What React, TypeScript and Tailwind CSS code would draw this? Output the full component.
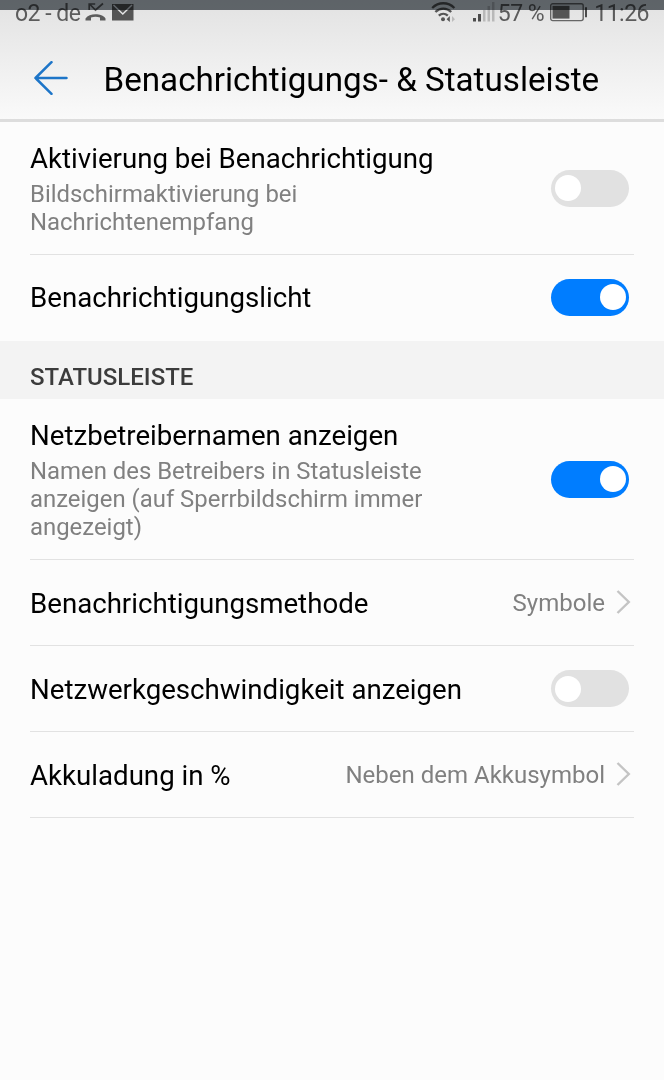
import { useState } from 'react';
import type { ReactNode } from 'react';
import clsx from 'clsx';

function Toggle({ label, initial }: { label: string; initial: boolean }) {
  const [on, setOn] = useState(initial);

  return (
    <button
      type="button"
      role="switch"
      aria-label={label}
      aria-checked={on}
      onClick={() => setOn(!on)}
      className={clsx(
        'flex h-[37px] w-[78px] shrink-0 items-center rounded-full px-[3.5px]',
        on ? 'justify-end bg-[#007dff]' : 'justify-start bg-[#e1e1e1]'
      )}
    >
      <span className="size-[26px] rounded-full bg-white" />
    </button>
  );
}

function Value({ children }: { children: ReactNode }) {
  return (
    <div className="-mr-[2px] flex shrink-0 items-center gap-[11px] text-[24px] text-[#808080]">
      <span className="pt-px">{children}</span>
      <svg className="-mt-[2px]" width="15" height="24" viewBox="0 0 15 24" fill="none" stroke="#c4c4c4" strokeWidth="2.4">
        <path d="M1.5 1 12.8 12 1.5 23" />
      </svg>
    </div>
  );
}

type RowProps = {
  title: string;
  description?: string;
  className: string;
  children: ReactNode;
};

function Row({ title, description, className, children }: RowProps) {
  return (
    <div className={clsx('mx-[30px] flex items-center justify-between border-[#e2e2e2] pr-[5px]', className)}>
      <div className="pt-[2px]">
        <h2 className="text-[27.65px] leading-[34px] whitespace-nowrap text-black">{title}</h2>
        {description && (
          <p className="mt-[4px] w-[410px] text-[23.9px] leading-[28px] text-[#808080]">{description}</p>
        )}
      </div>
      {children}
    </div>
  );
}

function StatusBar() {
  return (
    <div className="relative flex h-[27px] items-start justify-between pr-[15px] pl-[15px] text-[23px] leading-[27px] tracking-[-0.5px] text-[#5c5c5c]">
      <div className="flex items-start">
        <span>o2 - de</span>
        {/* Missed call */}
        <svg className="mt-[2px] ml-[5px]" width="22" height="20" viewBox="0 0 22 20" fill="none">
          <path d="M5 2.5 10.5 8 18 1.5M4.2 8V2h6" stroke="#5c5c5c" strokeWidth="1.7" />
          <path d="M.5 18.600v-2.200C2.600 13.200 6.300 12.200 10.500 12.200s8 1 10 4.200v2.200h-5.500v-3c-3-1-6-1-9 0v3z" fill="#5c5c5c" />
        </svg>
        {/* Mail */}
        <svg className="mt-[4px] ml-[5px]" width="22" height="17" viewBox="0 0 22 17" fill="none">
          <rect width="21.500" height="16.500" fill="#555" />
          <path d="m1.500 1 9.300 9L20 1" stroke="#e4e4e4" strokeWidth="1.500" />
        </svg>
      </div>
      <div className="flex items-start">
        {/* Wifi with traffic arrows */}
        <svg className="mt-px" width="26" height="21" viewBox="0 0 26 21" fill="none" stroke="#555" strokeWidth="2.300">
          <path d="M1.200 7c6.400-6.300 15.800-6.300 22.200 0M4.400 11c4.600-4.500 11.200-4.500 15.800 0M7.800 14.700c2.700-2.500 6.300-2.500 9 0" />
          <circle cx="12" cy="18.200" r="2" fill="#555" stroke="none" />
          <path d="M18.800 15v6l-3.200-2.700z" fill="#555" stroke="none" />
          <path d="M21 15v6l3-2.700z" fill="#bbb" stroke="none" />
        </svg>
        {/* Signal */}
        <svg className="mt-px ml-[16px]" width="23" height="21" viewBox="0 0 23 21">
          <path d="M0 17h3v3.500H0zM5 13h3v7.500H5z" fill="#4c4c4c" />
          <path d="M10 9h2.500v11.500H10zM14.500 5H17v15.500h-2.500zM19 1h2.500v19.500H19z" fill="#b9b9b9" />
        </svg>
        <span className="ml-[2px]">57 %</span>
        <svg className="mt-[3px] ml-[6px]" width="38" height="19" viewBox="0 0 38 19" fill="none">
          <rect x=".7" y=".8" width="32.500" height="16.800" rx="2" stroke="#666" strokeWidth="1.400" />
          <path d="M2.500 2.800h17v12.800h-17z" fill="#555" />
          <path d="M35 4.200h2v10h-2z" fill="#4c4c4c" />
        </svg>
        <span className="ml-[6px]">11:26</span>
      </div>
      {/* Dark strip over the top of the status icons */}
      <div className="absolute inset-x-0 top-0 h-[9.500px] bg-[#6a7075] mix-blend-multiply" />
    </div>
  );
}

export default function App() {
  return (
    <div className="h-[1080px] w-[664px] overflow-hidden bg-[#fcfcfc] font-[Roboto,sans-serif]">
      {/* Header */}
      <header className="h-[122px] border-b-3 border-[#dddddd] bg-linear-to-b from-[#e2e2e2] to-[#fafafa]">
        <StatusBar />
        <div className="flex h-[102px] items-center pl-[34px]">
          <button type="button" aria-label="Zurück">
            <svg width="34" height="34" viewBox="0 0 34 34" fill="none" stroke="#1d75c8" strokeWidth="2.500" strokeLinecap="round" strokeLinejoin="round">
              <path d="M32.500 17H1.500M17.500 1.200 1.500 17l16 15.800" />
            </svg>
          </button>
          <h1 className="ml-[35.5px] pt-[4px] text-[33.2px] whitespace-nowrap text-black">Benachrichtigungs- &amp; Statusleiste</h1>
        </div>
      </header>

      <main>
        <Row
          title="Aktivierung bei Benachrichtigung"
          description="Bildschirmaktivierung bei Nachrichtenempfang"
          className="h-[133px] border-b"
        >
          <Toggle label="Aktivierung bei Benachrichtigung" initial={false} />
        </Row>
        <Row title="Benachrichtigungslicht" className="h-[86px] pb-[2px]">
          <Toggle label="Benachrichtigungslicht" initial />
        </Row>

        <div className="flex h-[58px] items-center bg-[#f3f3f3] px-[30px] pt-[14px] text-[24px] font-medium text-[#3c3c3c]">
          STATUSLEISTE
        </div>

        <Row
          title="Netzbetreibernamen anzeigen"
          description="Namen des Betreibers in Statusleiste anzeigen (auf Sperrbildschirm immer angezeigt)"
          className="h-[161px] border-b"
        >
          <Toggle label="Netzbetreibernamen anzeigen" initial />
        </Row>
        <Row title="Benachrichtigungsmethode" className="h-[86px] border-b">
          <Value>Symbole</Value>
        </Row>
        <Row title="Netzwerkgeschwindigkeit anzeigen" className="h-[86px] border-b">
          <Toggle label="Netzwerkgeschwindigkeit anzeigen" initial={false} />
        </Row>
        <Row title="Akkuladung in %" className="h-[86px] border-b">
          <Value>Neben dem Akkusymbol</Value>
        </Row>
      </main>
    </div>
  );
}
